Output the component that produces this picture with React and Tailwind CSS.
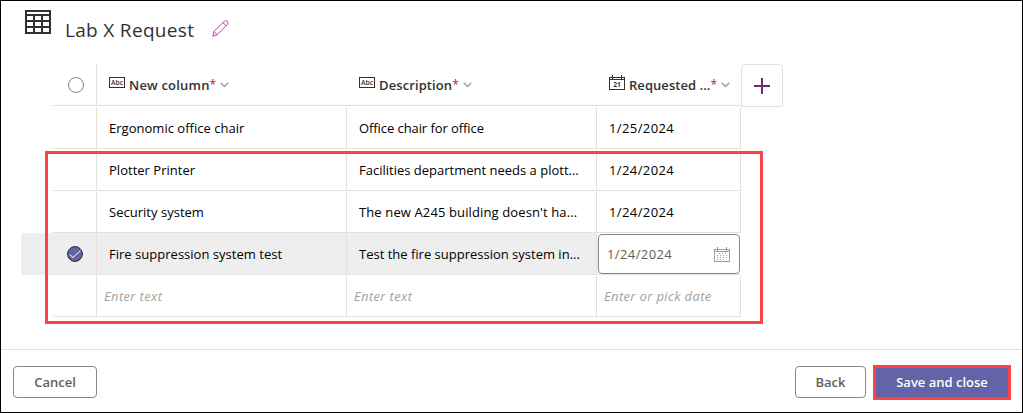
import React from 'react';

function TableIcon() {
  return (
    <svg width="26" height="24" viewBox="0 0 26 24" className="ml-6 mt-[9px] shrink-0" shapeRendering="crispEdges">
      <path fill="#323130" fillRule="evenodd" d="M0 0H26V24H0ZM2 2V4H24V2ZM2 6V10H8V6ZM10 6V10H16V6ZM18 6V10H24V6ZM2 12V16H8V12ZM10 12V16H16V12ZM18 12V16H24V12ZM2 18V22H8V18ZM10 18V22H16V18ZM18 18V22H24V18Z" />
    </svg>
  );
}

function PencilIcon() {
  return (
    <svg width="17" height="17" viewBox="0 0 17 17" className="ml-[18px] mt-[19px] shrink-0" fill="none" stroke="#c239b3" strokeWidth="1">
      <path d="M.7 16.2 2 11.5 12.2 1.4a2.1 2.1 0 0 1 3.1 3.1L5 14.8Z" />
      <path d="m2 11.5 3 3.3M11 2.6l3.1 3.1" />
    </svg>
  );
}

function AbcIcon() {
  return (
    <svg width="16" height="11" viewBox="0 0 16 11" className="mb-[5px] shrink-0">
      <rect x=".5" y=".5" width="15" height="10" fill="none" stroke="#323130" shapeRendering="crispEdges" />
      <text x="2" y="8" textLength="12" lengthAdjust="spacingAndGlyphs" fontSize="7" fontWeight="600" fontFamily="Open Sans, sans-serif" fill="#323130">Abc</text>
    </svg>
  );
}

function DateIcon() {
  return (
    <svg width="16" height="16" viewBox="0 0 16 16" className="mb-[4px] shrink-0">
      <path d="M.5 2.5h15v12H.5ZM0 4.5h16M3.5 0v4M12.5 0v4" fill="none" stroke="#323130" shapeRendering="crispEdges" />
      <text x="4.3" y="12" textLength="7.5" lengthAdjust="spacingAndGlyphs" fontSize="7" fontWeight="700" fontFamily="Open Sans, sans-serif" fill="#323130">21</text>
    </svg>
  );
}

function Chevron() {
  return (
    <svg width="9" height="6" viewBox="0 0 9 6" className="ml-1 shrink-0" fill="none" stroke="#a19f9d" strokeWidth="1.4">
      <path d="m.7.7 3.8 3.8L8.3.7" />
    </svg>
  );
}

function CalendarIcon() {
  return (
    <svg width="16" height="15" viewBox="0 0 16 15" className="mr-[9px] mt-px shrink-0" fill="none" stroke="#a19f9d" shapeRendering="crispEdges">
      <path d="M.5 2.5h15v12H.5ZM0 4.5h16M3.5 0v4M12.5 0v4" />
      <path d="M5 6.5h8M3 8.5h10M3 10.5h10M3 12.5h8" strokeDasharray="1 2" />
    </svg>
  );
}

function HeaderCell({ label, tracking, width, icon }) {
  return (
    <div className={`flex items-center pl-3 ${width}`}>
      {icon}
      <span className={`ml-1 whitespace-nowrap pt-0.5 text-[13px] font-semibold text-[#323130] ${tracking}`}>{label}</span>
      <span className="text-[12px] leading-4 text-[#a4262c]">*</span>
      <Chevron />
    </div>
  );
}

const rows = [
  { name: 'Ergonomic office chair', text: 'Office chair for office', textTracking: 'tracking-[-0.08px]', date: '1/25/2024' },
  { name: 'Plotter Printer', text: 'Facilities department needs a plott...', date: '1/24/2024' },
  { name: 'Security system', text: "The new A245 building doesn't ha...", textTracking: 'tracking-[0.12px]', date: '1/24/2024' },
  { name: 'Fire suppression system test', text: 'Test the fire suppression system in...', date: '1/24/2024', selected: true },
];

const cell = 'flex items-center whitespace-nowrap border-r border-[#e6e0dc] mt-px pt-0.5';

function Row({ row }) {
  return (
    <div className={`flex h-[42px] w-[720px] pl-8 ${row.selected ? 'bg-[linear-gradient(to_right,#eeeeee_577px,transparent_577px)]' : ''}`}>
      <div className="flex w-[688px] border-b border-[#e6e0dc]">
        <div className={`w-11 pl-[14px] ${cell}`}>
          {row.selected && (
            <svg width="16" height="16" viewBox="0 0 16 16" className="-mt-0.5">
              <circle cx="8" cy="8" r="7.4" fill="#6264a7" stroke="#252423" />
              <path d="m2.5 8.5 3.5 3 7.5-7" fill="none" stroke="#fff" />
            </svg>
          )}
        </div>
        <div className={`w-[250px] pl-3 ${cell}`}><span className="tracking-[0.02px]">{row.name}</span></div>
        <div className={`w-[250px] pl-3 ${cell}`}><span className={row.textTracking}>{row.text}</span></div>
        {row.selected ? (
          <div className="ml-px mt-px flex h-10 w-[142px] items-center justify-between rounded-sm border border-[#8a8886] bg-white pl-2 text-[#605e5c]">
            <span className="pt-0.5 tracking-[0.4px]">{row.date}</span>
            <CalendarIcon />
          </div>
        ) : (
          <div className={`w-36 pl-3 tracking-[0.4px] ${cell}`}>{row.date}</div>
        )}
      </div>
    </div>
  );
}

const button = 'flex h-8 items-center justify-center rounded-sm border border-[#8a8886] pt-0.5 text-[13px] font-semibold text-[#605e5c]';

export default function App() {
  return (
    <div className="relative flex h-[413px] w-[1023px] flex-col overflow-hidden border border-black bg-white font-['Open_Sans',sans-serif] text-[13px] text-black">
      <header className="flex h-[63px] shrink-0">
        <TableIcon />
        <h1 className="ml-[14px] mt-[15px] whitespace-nowrap text-[19px] leading-7 tracking-[0.32px] text-[#323130]">Lab X Request</h1>
        <PencilIcon />
      </header>

      <main className="flex h-[285px] shrink-0 flex-col pl-5">
        <div className="flex h-[42px] shrink-0 pl-8">
          <div className="flex w-[688px] border-b border-[#e1dfdd]">
            <div className="flex w-11 items-center border-r border-[#e6e0dc] pl-[15px]">
              <span className="h-4 w-4 rounded-full border border-[#8a8886]" />
            </div>
            <HeaderCell label="New column" tracking="tracking-[0.2px]" width="w-[250px]" icon={<AbcIcon />} />
            <HeaderCell label="Description" tracking="tracking-[0.1px]" width="w-[250px]" icon={<AbcIcon />} />
            <HeaderCell label="Requested ..." tracking="tracking-[0.05px]" width="w-36" icon={<DateIcon />} />
          </div>
          <button className="flex h-[43px] w-[42px] shrink-0 items-center justify-center rounded-t border border-[#e6e0dc]">
            <svg width="16" height="16" viewBox="0 0 16 16" stroke="#742774" strokeWidth="2" shapeRendering="crispEdges">
              <path d="M8 0v16M0 8h16" />
            </svg>
          </button>
        </div>
        <div className="flex flex-col pt-px">
          {rows.map((row) => <Row key={row.name} row={row} />)}
          <div className="flex h-[42px] pl-8 italic tracking-[0.35px] text-[#a19f9d]">
            <div className="flex w-[688px] border-b border-[#e6e0dc]">
              <div className={`w-11 ${cell}`} />
              <div className={`w-[250px] pl-[7px] ${cell}`}>Enter text</div>
              <div className={`w-[250px] pl-[7px] ${cell}`}>Enter text</div>
              <div className={`w-36 pl-[7px] ${cell}`}>Enter or pick date</div>
            </div>
          </div>
        </div>
      </main>

      <footer className="flex h-[63px] shrink-0 items-center border-t border-[#e1dfdd] pl-3 pr-[11px] pb-px pt-[3px]">
        <button className={`w-[84px] ${button}`}>Cancel</button>
        <button className={`ml-auto mr-[7px] w-[71px] ${button}`}>Back</button>
        <button className="h-[35px] w-[138px] border-[3px] border-[#fb4343] bg-[#6264a7] pt-px text-[13px] font-semibold text-white">Save and close</button>
      </footer>

      <div className="pointer-events-none absolute left-11 top-[150px] h-[173px] w-[718px] border-[3px] border-[#fb4343]" />
    </div>
  );
}
